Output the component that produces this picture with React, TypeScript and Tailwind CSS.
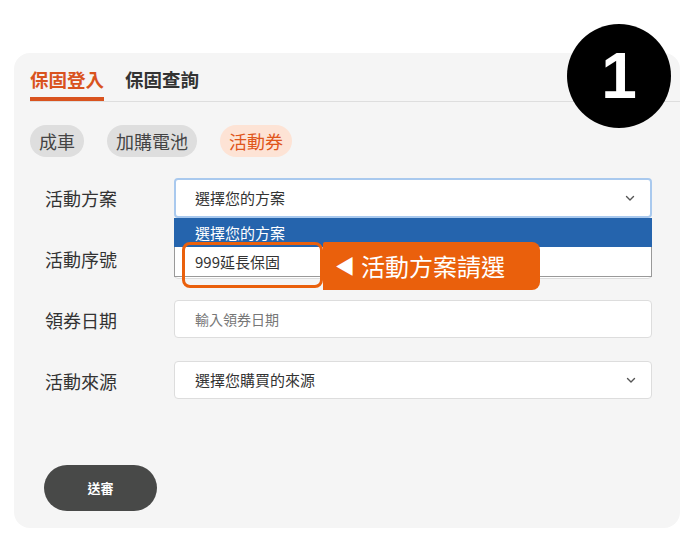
import React from 'react';

const FONT = "font-['Noto_Sans_CJK_TC','Noto_Sans',sans-serif]";

function Chevron() {
  return (
    <svg className="w-3 h-3" viewBox="0 0 12 12" fill="none" stroke="#555" strokeWidth={1.4} strokeLinecap="round" strokeLinejoin="round">
      <polyline points="2.5 4.5 6 8 9.5 4.5" />
    </svg>
  );
}

function Row({ label, children }: { label: string; children: React.ReactNode }) {
  return (
    <div className="flex items-center h-[40px]">
      <div className="w-[129px] text-[18px] text-[#333]">{label}</div>
      <div className="flex-1 relative h-full">{children}</div>
    </div>
  );
}

export default function App() {
  return (
    <div className={`${FONT} w-[694px] h-[539px] bg-white pt-[53px] px-[14px] relative overflow-hidden`}>
      <div className="bg-[#f5f5f5] rounded-[16px] h-[475px] pt-[13px] pl-[16px] pr-[28px] relative">
        {/* Tabs */}
        <div className="flex gap-[21px] border-b border-[#dedede] -mr-[28px]">
          <div className="text-[18.5px] font-bold leading-[26px] pb-[5px] border-b-4 border-[#d9531e] text-[#d9531e]">保固登入</div>
          <div className="text-[18.5px] font-bold leading-[26px] pb-[5px] border-b-4 border-transparent text-[#333]">保固查詢</div>
        </div>

        {/* Category pills */}
        <div className="flex gap-[23px] mt-[23px]">
          <div className="h-[32px] px-[9px] rounded-full bg-[#dedede] text-[#444] text-[18px] leading-[32px]">成車</div>
          <div className="h-[32px] px-[9px] rounded-full bg-[#dedede] text-[#444] text-[18px] leading-[32px]">加購電池</div>
          <div className="h-[32px] px-[9px] rounded-full bg-[#fde3d5] text-[#e0561c] text-[18px] leading-[32px]">活動券</div>
        </div>

        {/* Form */}
        <div className="pl-[15px] mt-[21px] flex flex-col gap-[21px]">
          <Row label="活動方案">
            <div className="h-full bg-white border-2 border-[#a9c9ee] rounded-[4px] flex items-center justify-between pl-[19px] pr-[14px] text-[15px] text-[#333]">
              <span>選擇您的方案</span>
              <Chevron />
            </div>
            {/* open dropdown */}
            <div className="absolute left-0 right-0 top-[40px] z-10">
              <div className="h-[29px] bg-[#2564ad] text-white text-[15px] leading-[29px] pl-[21px]">選擇您的方案</div>
              <div className="h-[30px] bg-white border border-t-0 border-[#999] text-[#333] text-[15px] leading-[29px] pl-[20px]">999延長保固</div>
            </div>
          </Row>
          <Row label="活動序號">
            <div className="h-full bg-white border border-[#ddd] rounded-[4px]" />
          </Row>
          <Row label="領券日期">
            <div className="h-[38px] bg-white border border-[#ddd] rounded-[4px] flex items-center pl-[20px] text-[14px] text-[#777]">輸入領券日期</div>
          </Row>
          <Row label="活動來源">
            <div className="h-[38px] bg-white border border-[#ddd] rounded-[4px] flex items-center justify-between pl-[20px] pr-[14px] text-[15px] text-[#333]">
              <span>選擇您購買的來源</span>
              <Chevron />
            </div>
          </Row>
        </div>

        <button className="mt-[64px] ml-[14px] w-[113px] h-[46px] rounded-full bg-[#484948] text-white text-[13px] font-bold">送審</button>

        {/* annotation: highlight + callout */}
        <div className="absolute left-[168px] top-[189px] z-20 flex items-start">
          <div className="w-[141px] h-[46px] border-[3px] border-[#ea600c] rounded-[8px]" />
          <div className="w-[217px] h-[48px] bg-[#ea600c] rounded-r-[8px] rounded-tl-[2px] flex items-center pl-[12px] text-white text-[24px] gap-[6px]">
            <span className="text-[20px]">◀</span>
            <span>活動方案請選</span>
          </div>
        </div>
      </div>

      {/* Step badge */}
      <div className="absolute left-[567px] top-[24px] w-[104px] h-[104px] rounded-full bg-black flex items-center justify-center z-30">
        <span className="text-white text-[64px] font-bold font-['Liberation_Sans',sans-serif] leading-none">1</span>
      </div>
    </div>
  );
}
